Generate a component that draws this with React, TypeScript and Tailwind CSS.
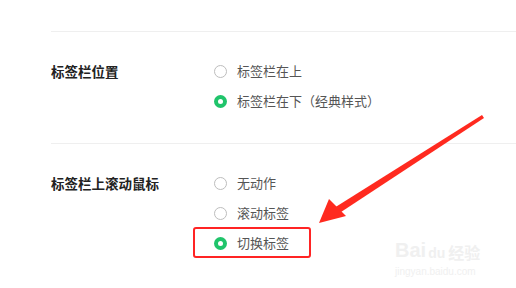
import React from "react";

type Option = { label: string; checked?: boolean; highlight?: boolean };

const sections: { title: string; options: Option[] }[] = [
  {
    title: "标签栏位置",
    options: [{ label: "标签栏在上" }, { label: "标签栏在下（经典样式）", checked: true }],
  },
  {
    title: "标签栏上滚动鼠标",
    options: [{ label: "无动作" }, { label: "滚动标签" }, { label: "切换标签", checked: true, highlight: true }],
  },
];

function Radio({ checked }: { checked?: boolean }) {
  return checked ? (
    <span className="w-[13px] h-[13px] rounded-full bg-[#20c46b] flex items-center justify-center shrink-0">
      <span className="w-[5px] h-[5px] rounded-full bg-white" />
    </span>
  ) : (
    <span className="w-[13px] h-[13px] rounded-full border border-[#bdbdbd] bg-white shrink-0" />
  );
}

export default function App() {
  return (
    <div
      className="relative w-[516px] h-[288px] overflow-hidden bg-white"
      style={{ fontFamily: '"Noto Sans CJK SC", "Noto Sans", sans-serif' }}
    >
      <div className="pl-[51px] pt-[31px]">
        {sections.map((s) => (
          <div key={s.title}>
            <div className="h-px bg-[#efefef]" />
            <div className="flex pt-[29px] pb-[32px]">
              <div className="w-[163px] text-[13.5px] leading-[20px] font-bold text-[#222]">{s.title}</div>
              <div className="flex flex-col gap-[10px]">
                {s.options.map((o) => (
                  <div key={o.label} className="relative flex items-center gap-[10px] h-[20px]">
                    <Radio checked={o.checked} />
                    <span className="text-[13px] leading-[20px] text-[#555]">{o.label}</span>
                    {o.highlight && (
                      <div className="absolute left-[-21px] top-[-6px] w-[118px] h-[31px] border-2 border-[#ff2424] rounded-[3px]" />
                    )}
                  </div>
                ))}
              </div>
            </div>
          </div>
        ))}
      </div>

      <svg className="absolute left-0 top-0" width="516" height="288" viewBox="0 0 516 288">
        <polygon points="482,115 484,118 338,214 334,208" fill="#ff2a1f" />
        <polygon points="319,223 329,199 346,216" fill="#ff2a1f" />
      </svg>

      <div className="absolute left-[395px] top-[240px] flex flex-col items-start text-[#f0f0f0] leading-none select-none">
        <div className="flex items-end">
          <span className="text-[20px] font-bold" style={{ fontFamily: '"Liberation Sans", sans-serif' }}>Bai</span>
          <span className="text-[14px] font-bold ml-[2px]" style={{ fontFamily: '"Liberation Sans", sans-serif' }}>du</span>
          <span className="text-[16px] font-bold ml-[3px]">经验</span>
        </div>
        <span className="text-[10px] mt-[7px]" style={{ fontFamily: '"Liberation Sans", sans-serif' }}>jingyan.baidu.com</span>
      </div>
    </div>
  );
}
